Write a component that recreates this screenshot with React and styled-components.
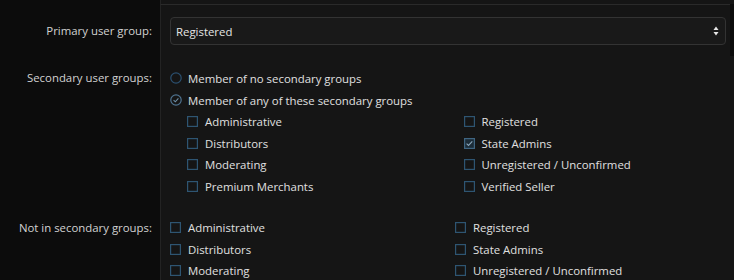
import styled, { createGlobalStyle } from 'styled-components';

const GlobalStyle = createGlobalStyle`
  html, body {
    margin: 0;
    padding: 0;
    background: #0c0c0c;
  }
  body {
    font-family: "Open Sans", "Noto Sans", sans-serif;
    font-size: 11.4px;
    color: #d6d6d6;
  }
`;

const Form = styled.div`
  width: 734px;
  height: 280px;
  overflow: hidden;
  background: #0c0c0c;
`;

const Row = styled.div`
  display: grid;
  grid-template-columns: 160px 1fr;
`;

const Label = styled.div`
  text-align: right;
  padding: ${(p) => p.$top || 0}px 8px 0 0;
  line-height: ${(p) => p.$lh || 22}px;
  color: #d2d2d2;
`;

const Field = styled.div`
  background: #151515;
  border-left: 1px solid #232323;
  border-top: ${(p) => (p.$topLine ? '1px solid #2a2a2a' : 'none')};
  margin-right: ${(p) => (p.$topLine ? 4 : 0)}px;
  padding: ${(p) => p.$pad || '0'};
  min-height: ${(p) => p.$h || 0}px;
`;

const Select = styled.div`
  height: 28px;
  box-sizing: border-box;
  margin-right: 4px;
  border: 1px solid #333;
  border-radius: 4px;
  background: #191919;
  display: flex;
  align-items: center;
  justify-content: space-between;
  padding: 0 6px 0 5px;
  color: #e4e4e4;
`;

const Option = styled.label`
  display: flex;
  align-items: center;
  height: ${(p) => p.$h || 22}px;
  gap: ${(p) => p.$gap || 6}px;
  color: #e0e0e0;
  white-space: nowrap;
`;

const Sub = styled.div`
  padding-left: ${(p) => p.$indent || 0}px;
  padding-right: 4px;
  display: grid;
  grid-template-columns: 1fr 1fr;
  column-gap: 10px;
`;

const Col = styled.div`
  display: flex;
  flex-direction: column;
`;

function Radio({ checked }) {
  return (
    <svg width="12" height="12" viewBox="0 0 12 12">
      <circle cx="6" cy="6" r="5.2" fill="none" stroke={checked ? '#4f7390' : '#2b5070'} strokeWidth="1.2" />
      {checked && (
        <path d="M3.6 6.2 L5.3 7.8 L8.4 4.4" fill="none" stroke="#6f90a8" strokeWidth="1.1" />
      )}
    </svg>
  );
}

function Check({ checked }) {
  return (
    <svg width="11" height="11" viewBox="0 0 11 11">
      <rect x="0.6" y="0.6" width="9.8" height="9.8" fill={checked ? '#1c2c38' : 'none'} stroke={checked ? '#3f6582' : '#2e5572'} strokeWidth="1.2" />
      {checked && (
        <path d="M2.6 5.6 L4.5 7.4 L8.3 3.4" fill="none" stroke="#8aa6bb" strokeWidth="1.1" />
      )}
    </svg>
  );
}

function Arrows() {
  return (
    <svg width="6" height="10" viewBox="0 0 6 10">
      <path d="M3 0.5 L5.5 4 H0.5 Z" fill="#e6e6e6" />
      <path d="M3 9.5 L5.5 6 H0.5 Z" fill="#e6e6e6" />
    </svg>
  );
}

const leftGroups = ['Administrative', 'Distributors', 'Moderating', 'Premium Merchants'];
const rightGroups = ['Registered', 'State Admins', 'Unregistered / Unconfirmed', 'Verified Seller'];

function CheckList({ items, checked = [], h }) {
  return (
    <Col>
      {items.map((name) => (
        <Option key={name} $h={h} $gap={7}>
          <Check checked={checked.includes(name)} />
          {name}
        </Option>
      ))}
    </Col>
  );
}

export default function App() {
  return (
    <Form>
      <GlobalStyle />
      <Row>
        <Label />
        <Field $h={4} />
      </Row>
      <Row>
        <Label $top={13} $lh={28}>Primary user group:</Label>
        <Field $topLine $pad="12px 0 11px 9px">
          <Select>
            Registered
            <Arrows />
          </Select>
        </Field>
      </Row>
      <Row>
        <Label $top={11}>Secondary user groups:</Label>
        <Field $pad="11px 0 10px 9px">
          <Option>
            <Radio />
            Member of no secondary groups
          </Option>
          <Option>
            <Radio checked />
            Member of any of these secondary groups
          </Option>
          <Sub $indent={17}>
            <CheckList items={leftGroups} h={21.5} />
            <CheckList items={rightGroups} checked={['State Admins']} h={21.5} />
          </Sub>
        </Field>
      </Row>
      <Row>
        <Label $top={10} $lh={21.5}>Not in secondary groups:</Label>
        <Field $pad="10px 0 0 9px" $h={100}>
          <Sub>
            <CheckList items={leftGroups} h={21.5} />
            <CheckList items={rightGroups} h={21.5} />
          </Sub>
        </Field>
      </Row>
    </Form>
  );
}
